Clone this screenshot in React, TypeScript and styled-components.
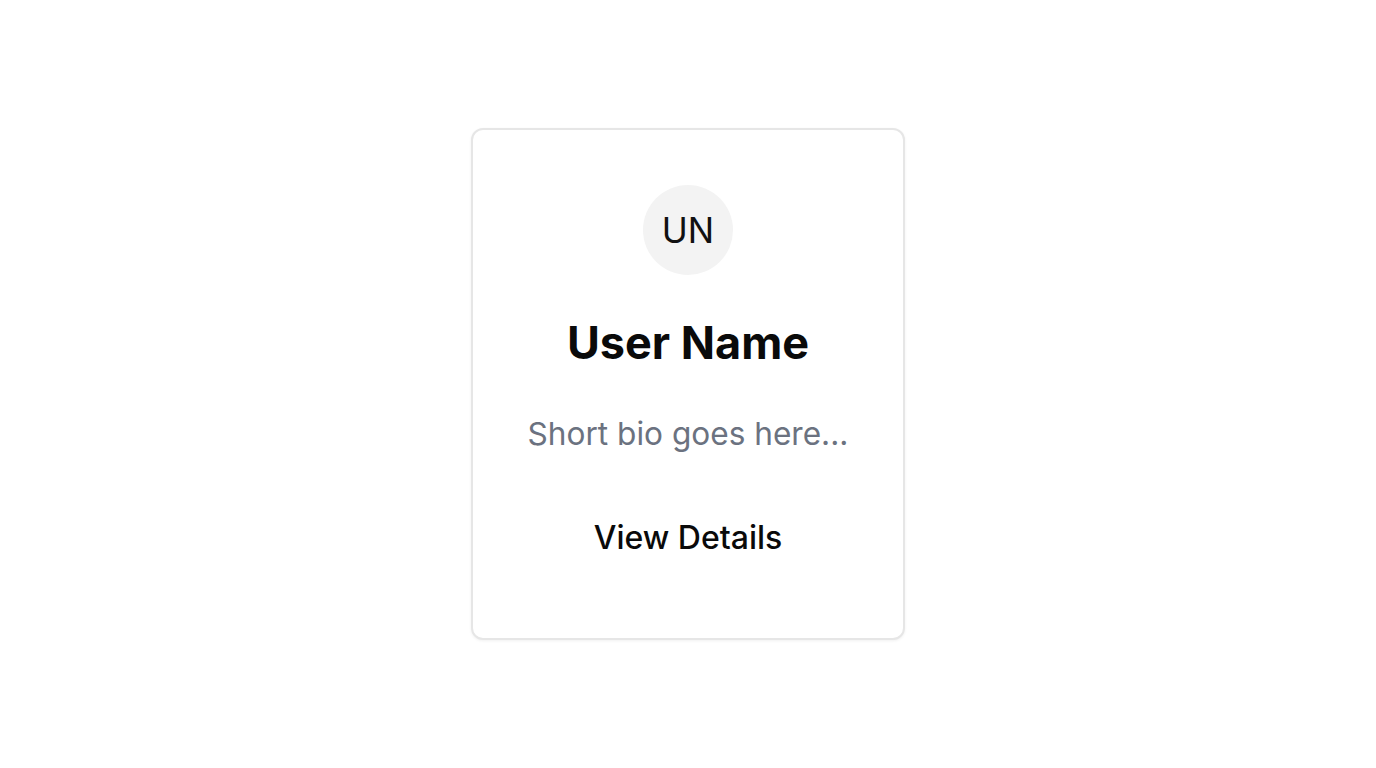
import React from "react";
import styled, { createGlobalStyle } from "styled-components";

const Global = createGlobalStyle`
  html, body { margin: 0; padding: 0; background: #ffffff; }
  body { font-family: Inter, "Noto Sans", sans-serif; }
`;

const Page = styled.div`
  min-height: 100vh;
  display: flex;
  align-items: center;
  justify-content: center;
`;

const Card = styled.div`
  box-sizing: border-box;
  width: 434px;
  height: 512px;
  border: 2px solid #e6e6e6;
  border-radius: 12px;
  box-shadow: 0 1px 3px rgba(0, 0, 0, 0.06);
  background: #fff;
  padding: 55px 24px 0;
  display: flex;
  flex-direction: column;
  align-items: center;
`;

const Avatar = styled.div`
  width: 90px;
  height: 90px;
  border-radius: 50%;
  background: #f3f3f3;
  display: flex;
  align-items: center;
  justify-content: center;
  font-size: 35px;
  color: #111;
`;

const Title = styled.h2`
  margin: 41px 0 0;
  font-size: 45px;
  line-height: 54px;
  font-weight: 700;
  color: #0a0a0a;
`;

const Bio = styled.p`
  margin: 40px 0 0;
  font-size: 31.6px;
  line-height: 48px;
  color: #6b7280;
`;

const Button = styled.button`
  margin-top: 56px;
  border: none;
  background: transparent;
  padding: 0;
  font-family: inherit;
  font-size: 32px;
  line-height: 48px;
  font-weight: 500;
  color: #0a0a0a;
  cursor: pointer;
`;

export default function App() {
  return (
    <>
      <Global />
      <Page>
        <Card>
          <Avatar>UN</Avatar>
          <Title>User Name</Title>
          <Bio>Short bio goes here...</Bio>
          <Button>View Details</Button>
        </Card>
      </Page>
    </>
  );
}
